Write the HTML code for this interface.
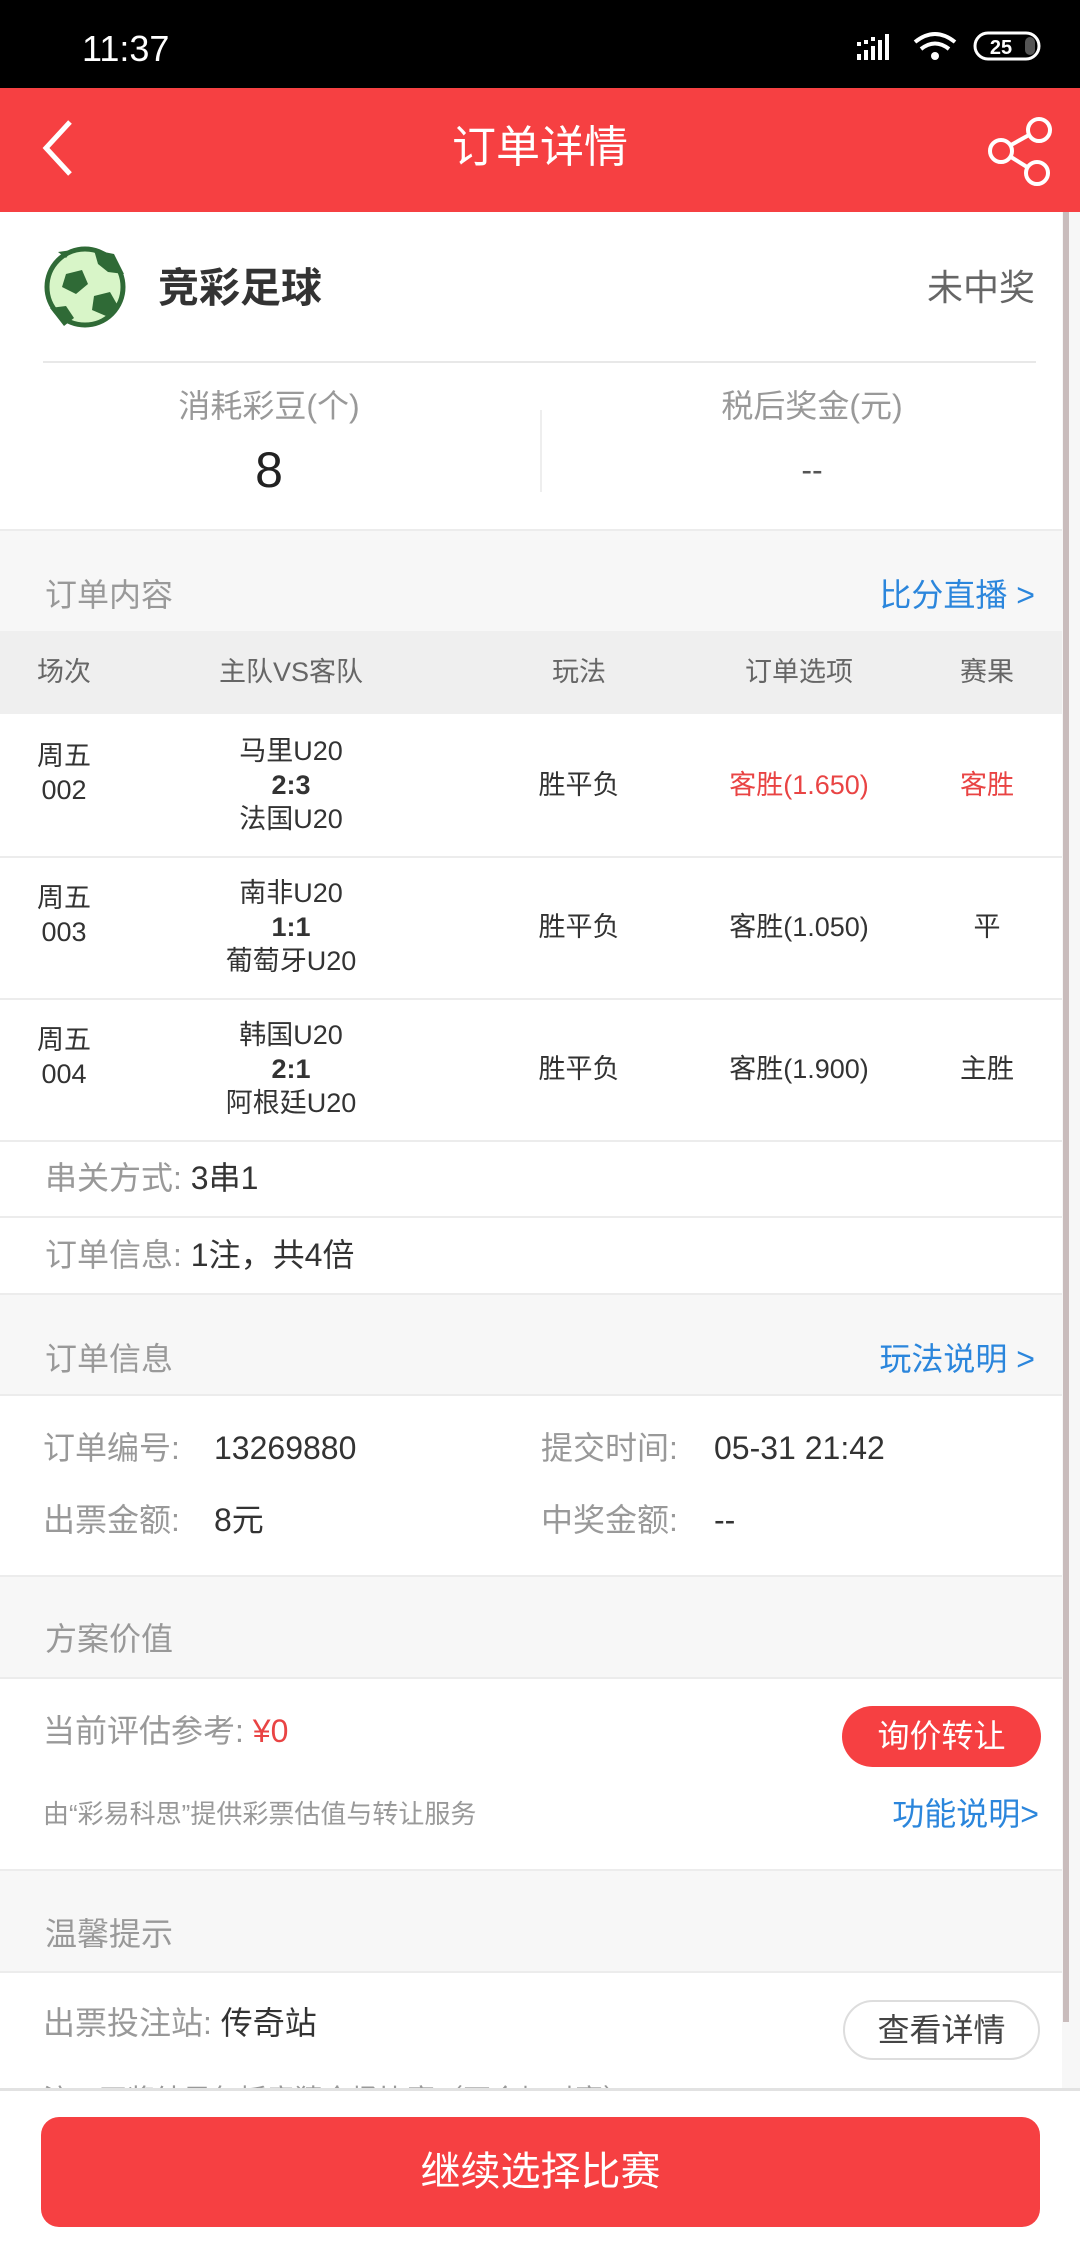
<!DOCTYPE html>
<html><head><meta charset="utf-8"><style>
*{margin:0;padding:0;box-sizing:border-box}
body{width:1080px;height:2248px;position:relative;overflow:hidden;background:#f7f7f7;font-family:"Liberation Sans","Noto Sans CJK SC",sans-serif}
.a{position:absolute}
.t{position:absolute;white-space:nowrap;line-height:60px;height:60px}
.c{text-align:center;width:300px}
.w{background:#fff}
.g{color:#999}
.d{color:#333}
.blue{color:#2b86dc}
.red{color:#e94444}
.ln{position:absolute;left:0;width:1062px;height:2px;background:#ececec}
</style></head><body>
<div class="a" style="left:0;top:0;width:1080px;height:88px;background:#000"></div>
<div class="t" style="left:82px;top:19px;color:#fff;font-size:36px">11:37</div>
<svg class="a" style="left:855px;top:28px" width="190" height="36" viewBox="0 0 190 36">
<g fill="#fff"><rect x="2" y="26" width="4" height="6"/><rect x="9" y="22" width="4" height="10"/><rect x="16" y="18" width="4" height="14"/><rect x="23" y="12" width="4" height="20"/><rect x="30" y="6" width="4" height="26"/>
<rect x="2" y="14" width="4" height="4"/><rect x="9" y="12" width="4" height="4"/><rect x="16" y="9" width="4" height="4"/></g>
<g fill="none" stroke="#fff" stroke-width="4"><path d="M60 14 Q80 -2 100 14"/><path d="M66 21 Q80 10 94 21"/></g><circle cx="80" cy="28" r="4" fill="#fff"/>
<rect x="120" y="5" width="64" height="26" rx="13" fill="none" stroke="#fff" stroke-width="3"/>
<text x="146" y="26" fill="#fff" font-size="20" font-weight="bold" text-anchor="middle" font-family="Liberation Sans">25</text>
<rect x="170" y="9" width="10" height="18" rx="5" fill="#555"/>
</svg>
<div class="a" style="left:0;top:88px;width:1080px;height:124px;background:#f64042"></div>
<svg class="a" style="left:38px;top:118px" width="40" height="60"><path d="M32 4 L8 30 L32 56" fill="none" stroke="#fff" stroke-width="5"/></svg>
<div class="t" style="left:390px;width:300px;text-align:center;top:118px;color:#fff;font-size:44px">订单详情</div>
<svg class="a" style="left:980px;top:108px" width="80" height="90"><g fill="none" stroke="#fff" stroke-width="4"><circle cx="59" cy="22" r="11"/><circle cx="21" cy="43" r="11"/><circle cx="57" cy="65" r="11"/><path d="M31 37 L49 27 M31 49 L47 59"/></g></svg>
<div class="a" style="left:1063px;top:212px;width:6px;height:1810px;background:#c9bcbc"></div>
<div class="a w" style="left:0;top:212px;width:1062px;height:317px"></div>
<svg class="a" style="left:44px;top:246px" width="82" height="82" viewBox="0 0 82 82"><circle cx="41" cy="41" r="38" fill="#d8f5c8" stroke="#2f6a36" stroke-width="5"/>
<g fill="#2f6a36"><polygon points="22,28 38,24 44,38 32,48 18,41"/><polygon points="50,50 66,46 74,60 62,70 48,64"/><polygon points="50,4 70,8 80,28 64,26 54,18"/><polygon points="6,62 22,60 30,72 20,80"/><polygon points="14,6 28,4 22,12"/></g></svg>
<div class="t d" style="left:158px;top:258px;font-size:41px;font-weight:bold">竞彩足球</div>
<div class="t" style="right:45px;top:258px;font-size:36px;color:#666">未中奖</div>
<div class="a" style="left:43px;top:361px;width:993px;height:2px;background:#e8e8e8"></div>
<div class="t g c" style="left:119px;top:376px;font-size:32px">消耗彩豆(个)</div>
<div class="t g c" style="left:662px;top:376px;font-size:32px">税后奖金(元)</div>
<div class="t c" style="left:119px;top:440px;font-size:50px;color:#222">8</div>
<div class="t c" style="left:662px;top:440px;font-size:32px;color:#555">--</div>
<div class="a" style="left:540px;top:410px;width:2px;height:82px;background:#eee"></div>
<div class="ln" style="top:529px"></div>
<div class="t g" style="left:45px;top:565px;font-size:32px">订单内容</div>
<div class="t blue" style="right:45px;top:565px;font-size:32px">比分直播 &gt;</div>
<div class="a" style="left:0;top:631px;width:1062px;height:83px;background:#efefef"></div>
<div class="t c" style="left:-86px;top:642px;font-size:27px;color:#666">场次</div>
<div class="t c" style="left:141px;top:642px;font-size:27px;color:#666">主队VS客队</div>
<div class="t c" style="left:429px;top:642px;font-size:27px;color:#666">玩法</div>
<div class="t c" style="left:649px;top:642px;font-size:27px;color:#666">订单选项</div>
<div class="t c" style="left:837px;top:642px;font-size:27px;color:#666">赛果</div>

<div class="a w" style="left:0;top:714px;width:1062px;height:427px"></div>
<div class="t c d" style="left:-86px;top:739px;font-size:27px;line-height:34px">周五<br>002</div>
<div class="t c d" style="left:141px;top:734px;font-size:27px;line-height:34px;height:110px">马里U20<br><b>2:3</b><br>法国U20</div>
<div class="t c d" style="left:429px;top:755px;font-size:27px">胜平负</div>
<div class="t c red" style="left:649px;top:755px;font-size:27px">客胜(1.650)</div>
<div class="t c red" style="left:837px;top:755px;font-size:27px">客胜</div>
<div class="ln" style="top:856px"></div>
<div class="t c d" style="left:-86px;top:881px;font-size:27px;line-height:34px">周五<br>003</div>
<div class="t c d" style="left:141px;top:876px;font-size:27px;line-height:34px;height:110px">南非U20<br><b>1:1</b><br>葡萄牙U20</div>
<div class="t c d" style="left:429px;top:897px;font-size:27px">胜平负</div>
<div class="t c d" style="left:649px;top:897px;font-size:27px">客胜(1.050)</div>
<div class="t c d" style="left:837px;top:897px;font-size:27px">平</div>
<div class="ln" style="top:998px"></div>
<div class="t c d" style="left:-86px;top:1023px;font-size:27px;line-height:34px">周五<br>004</div>
<div class="t c d" style="left:141px;top:1018px;font-size:27px;line-height:34px;height:110px">韩国U20<br><b>2:1</b><br>阿根廷U20</div>
<div class="t c d" style="left:429px;top:1039px;font-size:27px">胜平负</div>
<div class="t c d" style="left:649px;top:1039px;font-size:27px">客胜(1.900)</div>
<div class="t c d" style="left:837px;top:1039px;font-size:27px">主胜</div>

<div class="a w" style="left:0;top:1141px;width:1062px;height:152px"></div>
<div class="ln" style="top:1140px"></div>
<div class="t" style="left:45px;top:1148px;font-size:32px"><span class="g">串关方式:</span><span class="d"> 3串1</span></div>
<div class="ln" style="top:1216px"></div>
<div class="t" style="left:45px;top:1225px;font-size:32px"><span class="g">订单信息:</span><span class="d"> 1注，共4倍</span></div>
<div class="ln" style="top:1293px"></div>
<div class="t g" style="left:45px;top:1329px;font-size:32px">订单信息</div>
<div class="t blue" style="right:45px;top:1329px;font-size:32px">玩法说明 &gt;</div>
<div class="a w" style="left:0;top:1395px;width:1062px;height:180px"></div>
<div class="ln" style="top:1394px"></div>
<div class="t g" style="left:43px;top:1418px;font-size:32px">订单编号:</div>
<div class="t d" style="left:214px;top:1418px;font-size:32px">13269880</div>
<div class="t g" style="left:541px;top:1418px;font-size:32px">提交时间:</div>
<div class="t d" style="left:714px;top:1418px;font-size:32px">05-31 21:42</div>
<div class="t g" style="left:43px;top:1490px;font-size:32px">出票金额:</div>
<div class="t d" style="left:214px;top:1490px;font-size:32px">8元</div>
<div class="t g" style="left:541px;top:1490px;font-size:32px">中奖金额:</div>
<div class="t d" style="left:714px;top:1490px;font-size:32px">--</div>
<div class="ln" style="top:1575px"></div>
<div class="t g" style="left:45px;top:1609px;font-size:32px">方案价值</div>
<div class="a w" style="left:0;top:1678px;width:1062px;height:191px"></div>
<div class="ln" style="top:1677px"></div>
<div class="t" style="left:43px;top:1701px;font-size:32px"><span class="g">当前评估参考:</span><span class="red"> ¥0</span></div>
<div class="a" style="left:842px;top:1706px;width:199px;height:61px;border-radius:31px;background:#f64042;color:#fff;font-size:32px;line-height:61px;text-align:center">询价转让</div>
<div class="t g" style="left:43px;top:1784px;font-size:26px">由“彩易科思”提供彩票估值与转让服务</div>
<div class="t blue" style="right:41px;top:1784px;font-size:32px">功能说明&gt;</div>
<div class="ln" style="top:1869px"></div>
<div class="t g" style="left:45px;top:1904px;font-size:32px">温馨提示</div>
<div class="a w" style="left:0;top:1972px;width:1062px;height:120px"></div>
<div class="ln" style="top:1971px"></div>
<div class="t" style="left:43px;top:1993px;font-size:32px"><span class="g">出票投注站:</span><span class="d"> 传奇站</span></div>
<div class="a" style="left:843px;top:2000px;width:197px;height:60px;border-radius:30px;border:2px solid #ddd;color:#444;font-size:32px;line-height:56px;text-align:center;background:#fff">查看详情</div>
<div class="t g" style="left:43px;top:2070px;font-size:28px">注：开奖结果包括竞猜全场比赛（不含加时赛）</div>
<div class="a" style="left:0;top:2088px;width:1080px;height:160px;background:#fff;border-top:3px solid #e2e2e2"></div>
<div class="a" style="left:41px;top:2117px;width:999px;height:110px;border-radius:18px;background:#f64042;color:#fff;font-size:40px;line-height:110px;text-align:center">继续选择比赛</div>
</body></html>
